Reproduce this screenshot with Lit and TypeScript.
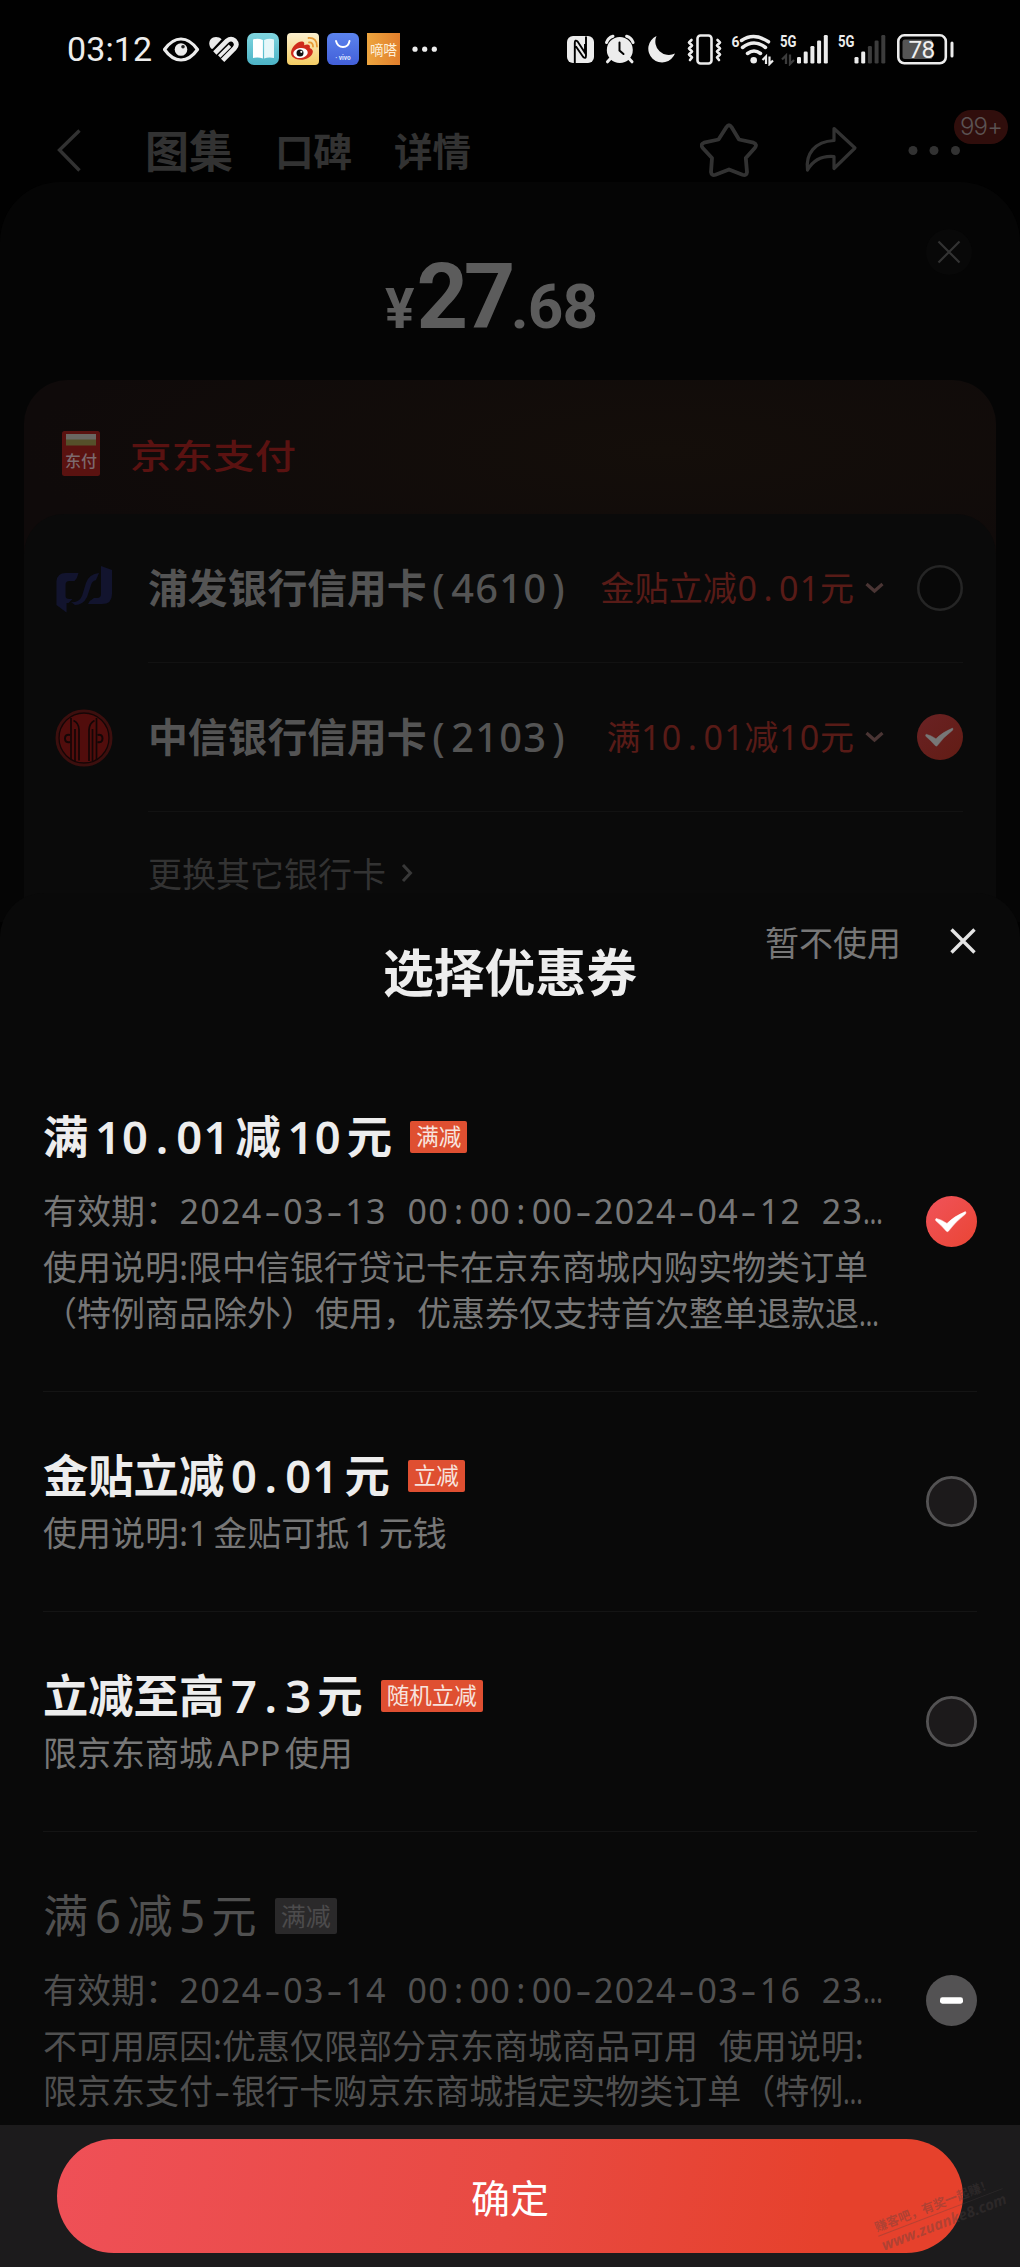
import { LitElement, html, svg, css, nothing } from "lit";
import { customElement, property } from "lit/decorators.js";
import { classMap } from "lit/directives/class-map.js";

/* Sets ASCII runs on a fixed pitch while CJK text keeps its own widths. */
const pitch = (text: string) =>
  (text.match(/[0-9]+|[A-Z]+|[().:\-]|…| +|[^0-9A-Z().:\-… ]+/g) ?? []).map((run) => {
    if (/^[0-9]/.test(run)) return html`<span class="num">${run}</span>`;
    if (/^[A-Z]/.test(run)) return html`<span class="cap">${run}</span>`;
    if (run === "-") return html`<span class="cell hyphen">-</span>`;
    if (run === "…") return html`<span class="more">…</span>`;
    if (/^[().:]$/.test(run)) return html`<span class="cell">${run}</span>`;
    if (/^ /.test(run)) return html`<span class="cell">&nbsp;</span>`;
    return run;
  });

const gap = html`<span class="gap"></span>`;

const shared = css`
  * { box-sizing: border-box; }
  svg { display: block; flex: none; }
  .num { letter-spacing: 0.037em; margin-left: 0.018em; margin-right: -0.018em; }
  .cap { letter-spacing: 0; }
  .cell { display: inline-block; width: 0.61em; text-align: center; }
  .hyphen { transform: scaleX(1.45); }
  .more { display: inline-block; transform: scaleX(0.74); transform-origin: 0 50%; }
  .gap { display: inline-block; width: 0.13em; }
`;

type Mark = "on" | "off" | "none";

@customElement("round-mark")
export class RoundMark extends LitElement {
  @property() kind: Mark = "off";
  @property({ type: Number }) size = 51;
  @property({ type: Boolean }) dim = false;

  static styles = css`
    :host { display: block; flex: none; }
    svg { display: block; }
  `;

  render() {
    const stroke = this.dim ? "#252525" : "#535253";
    const inside = this.dim ? "#080808" : "#1c1a1b";
    return html`<svg width=${this.size} height=${this.size} viewBox="0 0 51 51">
      <defs>
        <linearGradient id="g" x1="0" y1="0" x2="1" y2="1">
          <stop offset="0" stop-color=${this.dim ? "#6a2224" : "#f0535a"} />
          <stop offset="1" stop-color=${this.dim ? "#621c14" : "#ea4534"} />
        </linearGradient>
      </defs>
      ${this.kind === "off"
        ? svg`<circle cx="25.5" cy="25.5" r="24.1" fill=${inside} stroke=${stroke} stroke-width="2.8" />`
        : nothing}
      ${this.kind === "on"
        ? svg`<circle cx="25.5" cy="25.5" r="25.5" fill="url(#g)" />
            <path d="M10.2 22.4q4.800 1 10.800 5Q28.200 20.200 39.400 15.600q1 .9.100 2.400Q29.500 25.500 22.400 35.200q-1 .9-2 0Q15.500 29.500 9.700 24.600q-.6-1.400.5-2.200z" fill=${this.dim ? "#777" : "#fff"} stroke=${this.dim ? "#777" : "#fff"} stroke-width=".5" />`
        : nothing}
      ${this.kind === "none"
        ? svg`<circle cx="25.5" cy="25.5" r="25.5" fill="#535253" />
            <rect x="14" y="22.300" width="23" height="6.400" rx="2.400" fill="#fff" />`
        : nothing}
    </svg>`;
  }
}

@customElement("status-bar")
export class StatusBar extends LitElement {
  static styles = [
    shared,
    css`
      :host { display: flex; align-items: flex-start; height: 98px; padding: 33px 64px 0 67px; }
      .time { font: 400 34px/33px Roboto, "Noto Sans", sans-serif; color: #ededed; width: 96px; letter-spacing: 0.1px; }
      .left { display: flex; gap: 8px; }
      .right { display: flex; margin-left: auto; }
    `,
  ];

  private bars(x: number, lit: number) {
    return [0, 1, 2, 3, 4].map((i) => {
      const top = [57, 51.5, 46, 40.5, 35][i];
      return svg`<rect x=${x + i * 6.7} y=${top} width="4" height=${63.5 - top} rx="1.300" fill=${i < lit ? "#ececec" : "#3c3c3c"} />`;
    });
  }

  render() {
    return html`
      <span class="time">03:12</span>
      <div class="left">
        <svg width="38" height="33" viewBox="163 33 38 33">
          <path d="M164.500 49.500Q172 39 181 39t16.500 10.500Q190 60 181 60t-16.500-10.500z" fill="none" stroke="#ececec" stroke-width="3.200" stroke-linejoin="round" />
          <circle cx="181" cy="49.500" r="6.300" fill="#ececec" /><circle cx="183" cy="46.800" r="1.800" fill="#222" />
        </svg>
        <svg width="30" height="33" viewBox="209 33 30 33">
          <path d="M211.500 48.800C207.500 45 208.800 37 216 37c2.300 0 4.200.8 5.600 2.200L213 48.500q-.7.700-1.500.3z" fill="#ececec" />
          <path d="M214.800 53 227 40.800q4-3.200 7.600-.2 3.500 4-.1 7.700L222.600 60.300" fill="none" stroke="#ececec" stroke-width="4.700" />
          <path d="M219.200 56.500 230 45.700" fill="none" stroke="#ececec" stroke-width="3.400" />
        </svg>
        <svg width="32" height="33" viewBox="247 33 32 33">
          <defs><linearGradient id="bk" x2="0" y2="1"><stop stop-color="#80d5df" /><stop offset="1" stop-color="#4cb3c6" /></linearGradient></defs>
          <rect x="247" y="33" width="32" height="32" rx="7" fill="url(#bk)" />
          <path d="M253 39.500q5-1.800 9.900.6v18.500q-4.700-2-9.900-.5z" fill="#fff" />
          <path d="M274 39.500q-5-1.800-9.900.6v18.500q4.700-2 9.900-.5z" fill="#e6f7f9" />
        </svg>
        <svg width="32" height="33" viewBox="287 33 32 33">
          <defs><linearGradient id="wb" x2="0" y2="1"><stop stop-color="#fbf0cf" /><stop offset="1" stop-color="#f5cd63" /></linearGradient></defs>
          <rect x="287" y="33" width="32" height="32" rx="4" fill="url(#wb)" />
          <path d="M291 53c0-6 7-12.500 11.500-11.500 2 .4 2 2.500 1.600 3.800 3-1.300 6.700-1 5.700 2.600 2.800 1 3.700 3 2.700 5.300-1.500 4-6.500 6.500-11.500 6.500-5.500 0-10-2.700-10-6.700z" fill="#cf2b1d" />
          <ellipse cx="300.500" cy="53" rx="7.300" ry="5" fill="#fff" transform="rotate(-8 300.500 53)" />
          <circle cx="300" cy="53" r="3.500" fill="#111" /><circle cx="301.300" cy="51.800" r="1.100" fill="#fff" />
          <path d="M309 42.500q4-.4 4 4M308.500 38q8.500-.5 8.500 8.500" fill="none" stroke="#e79a35" stroke-width="1.800" stroke-linecap="round" />
        </svg>
        <svg width="32" height="33" viewBox="327 33 32 33">
          <defs><linearGradient id="vb" x2="0" y2="1"><stop stop-color="#5b83ee" /><stop offset="1" stop-color="#425fd8" /></linearGradient></defs>
          <rect x="327" y="33" width="32" height="32" rx="6" fill="url(#vb)" />
          <path d="M336 41q1.500 6 7 6t6.500-6" fill="none" stroke="#fff" stroke-width="1.900" stroke-linecap="round" />
          <text x="343" y="59.600" text-anchor="middle" font-family="Roboto" font-size="6.500" font-weight="700" fill="#dde6ff">· vivo</text>
        </svg>
        <svg width="33" height="33" viewBox="366 33 33 33">
          <defs><linearGradient id="dd" x2="1" y2="0"><stop stop-color="#eda53f" /><stop offset="1" stop-color="#e27f2c" /></linearGradient></defs>
          <rect x="366" y="33" width="33" height="32" fill="url(#dd)" />
          <text x="382.500" y="54.500" text-anchor="middle" font-family="Noto Sans CJK SC" font-size="14" fill="#fdf1dc" textLength="27" lengthAdjust="spacingAndGlyphs">嘀嗒</text>
        </svg>
        <svg width="32" height="33" viewBox="407 33 32 33" fill="#ececec">
          <circle cx="414" cy="49.200" r="2.600" /><circle cx="423.700" cy="49.200" r="2.600" /><circle cx="433.300" cy="49.200" r="2.600" />
        </svg>
      </div>
      <div class="right">
        <svg width="35" height="33" viewBox="565 33 35 33">
          <rect x="567" y="36" width="27" height="27" rx="6" fill="#ececec" />
          <path d="M574.800 63V43q0-4 3-1.200l7.200 11V44M586 36.500v19q0 4-3 1.200l-7.200-10.500" fill="none" stroke="#000" stroke-width="1.900" />
        </svg>
        <svg width="40" height="33" viewBox="600 33 40 33">
          <circle cx="619.800" cy="50" r="13" fill="#ececec" />
          <path d="M606.500 42.500q1.500-4.800 6.500-6.300M633.100 42.500q-1.500-4.800-6.500-6.300M610.500 58.500 607.500 61.800M629 58.500l3 3.300" stroke="#ececec" stroke-width="3" stroke-linecap="round" fill="none" />
          <path d="M619.500 42.500v8l4 3.500" fill="none" stroke="#000" stroke-width="2" stroke-linecap="round" />
        </svg>
        <svg width="42" height="33" viewBox="640 33 42 33">
          <path d="M656.500 36A13.800 13.800 0 1 0 675 53.500 13.500 13.500 0 0 1 656.500 36z" fill="#ececec" />
        </svg>
        <svg width="45" height="33" viewBox="682 33 45 33" fill="none" stroke="#ececec">
          <rect x="697.500" y="35.500" width="14" height="28" rx="3" stroke-width="2.600" />
          <path d="m691.500 40-2.500 2.500 3 3-3 3 3 3-3 3 3 3-2 2.500M717.500 40l2.500 2.500-3 3 3 3-3 3 3 3-3 3 2 2.500" stroke-width="2.600" stroke-linejoin="round" stroke-linecap="round" />
        </svg>
        <svg width="50" height="33" viewBox="727 33 50 33" fill="none" stroke="#ececec">
          <text x="731.500" y="46.500" font-family="Roboto" font-weight="700" font-size="15.500" textLength="8" lengthAdjust="spacingAndGlyphs" fill="#ececec" stroke="none">6</text>
          <path d="M741.500 40.500q12.500-8.500 27 1.300M742.500 47.500q11.500-9 23 0M747.500 53.500q6.500-5 13 0" stroke-width="3.500" stroke-linecap="round" />
          <circle cx="753.700" cy="60.300" r="3.300" fill="#ececec" stroke="none" />
          <path d="m762.500 60 3.500-3.500V64M769.500 56.500V64l3.500-3.500" stroke-width="2.200" />
        </svg>
        <svg width="57" height="33" viewBox="777 33 57 33">
          <text x="780" y="46.800" font-family="Roboto" font-weight="700" font-size="16.500" textLength="16.500" lengthAdjust="spacingAndGlyphs" fill="#ececec">5G</text>
          <path d="m782 59.500 4-4V64M790 54.500V64l4-4" stroke="#3c3c3c" stroke-width="2.300" fill="none" />
          ${this.bars(797, 5)}
        </svg>
        <svg width="58" height="33" viewBox="834 33 58 33">
          <text x="838" y="46.800" font-family="Roboto" font-weight="700" font-size="16.500" textLength="16.500" lengthAdjust="spacingAndGlyphs" fill="#ececec">5G</text>
          ${this.bars(854.5, 2)}
        </svg>
        <svg width="64" height="33" viewBox="892 33 64 33">
          <rect x="898.300" y="35.300" width="47.500" height="28" rx="6" fill="none" stroke="#ececec" stroke-width="2.600" />
          <rect x="902.500" y="39.500" width="30" height="19.500" rx="2.500" fill="#555" />
          <rect x="950.500" y="41.500" width="3" height="16" rx="1.500" fill="#ececec" />
          <text x="921.500" y="58" text-anchor="middle" font-family="Roboto" font-size="24.500" font-weight="400" letter-spacing="-.8" fill="#f0f0f0">78</text>
        </svg>
      </div>
    `;
  }
}

@customElement("page-nav")
export class PageNav extends LitElement {
  static styles = [
    shared,
    css`
      :host { display: flex; align-items: center; height: 104px; padding: 0 12px 0 55px; color: #323232; font-family: "Noto Sans CJK SC", sans-serif; font-weight: 700; }
      .tabs { display: flex; align-items: center; margin-left: 62px; padding-bottom: 2px; gap: 42px; font-size: 38.500px; line-height: 60px; }
      .first { font-size: 44px; }
      .tools { display: flex; align-items: center; margin-left: auto; }
      .menu { position: relative; width: 111px; }
      .badge { position: absolute; left: 57px; top: -10px; width: 54px; height: 34px; border-radius: 17px; background: #300e0c; color: #5b5353; font: 300 24px/34px Inter, "Noto Sans", sans-serif; letter-spacing: -0.8px; text-align: center; }
    `,
  ];

  render() {
    return html`
      <svg width="28" height="48" viewBox="55 126 28 48"><path d="M79.500 130.500 59.500 150l20 20.500" fill="none" stroke="#323232" stroke-width="3.400" /></svg>
      <div class="tabs"><span class="first">图集</span><span>口碑</span><span>详情</span></div>
      <div class="tools">
        <svg width="100" height="60" viewBox="701 120 100 60"><path d="M727.500 127q2.500-3.500 5 0l7.500 12.500 14.500 3.200q4 1.500 1.500 5L746.800 158l1.200 14q-.3 4-4.500 2.700L730 169.500l-13.500 5.200q-4 1.300-4.500-2.700l1-14-9.500-10.300q-2.500-3.500 1.500-5l14.500-3.200z" fill="none" stroke="#323232" stroke-width="3.800" stroke-linejoin="round" /></svg>
        <svg width="97" height="60" viewBox="801 120 97 60"><path d="M835 128.500 856 148l-21 20.500V156.500c-12-1-20.500 3-26.500 13.500-2-16 7-28.500 26.500-29.500z" fill="none" stroke="#323232" stroke-width="3.200" stroke-linejoin="round" /></svg>
        <div class="menu">
          <svg width="70" height="60" viewBox="897 120 70 60" fill="#323232"><circle cx="913" cy="150.500" r="4.500" /><circle cx="934" cy="150.500" r="4.500" /><circle cx="955.500" cy="150.500" r="4.500" /></svg>
          <span class="badge">99+</span>
        </div>
      </div>
    `;
  }
}

interface Bank { logo: "spd" | "citic"; name: string; offer: string; mark: Mark; }

const BANKS: Bank[] = [
  { logo: "spd", name: "浦发银行信用卡(4610)", offer: "金贴立减0.01元", mark: "off" },
  { logo: "citic", name: "中信银行信用卡(2103)", offer: "满10.01减10元", mark: "on" },
];

@customElement("pay-sheet")
export class PaySheet extends LitElement {
  static styles = [
    shared,
    css`
      :host { display: block; height: 740px; margin-top: -20px; border-radius: 60px 60px 0 0; background: #050505; padding: 0 24px; font-family: "Noto Sans", "Noto Sans CJK SC", sans-serif; overflow: hidden; }
      .top { display: grid; grid-template-columns: 46px 1fr 46px; height: 198px; }
      .price { display: flex; justify-content: center; align-items: baseline; padding: 64px 38px 0 0; color: #5c5c5c; font: 700 90px/104px Roboto, sans-serif; letter-spacing: -4.500px; }
      .yen { font-size: 55px; letter-spacing: 2px; }
      .cents { font-size: 62px; letter-spacing: -1px; }
      .x { margin: 47px 0 0 -24px; }
      .card { border-radius: 44px 44px 0 0; height: 560px; background: radial-gradient(ellipse 640px 150px at 640px 70px, #140e0a, #0f0a0a 100%); }
      .brand { display: flex; align-items: center; height: 134px; padding: 13px 0 0 38px; }
      .brand-name { display: inline-block; margin-left: 30px; color: #5a1211; font: 500 41.500px/50px "Noto Sans CJK SC", sans-serif; transform: scaleY(0.82); }
      .list { background: #0a0a0a; height: 430px; border-radius: 40px 40px 0 0; padding-right: 33px; }
      .row { display: flex; align-items: center; height: 149px; }
      .logo { width: 124px; padding-left: 31px; flex: none; }
      .body { flex: 1; display: flex; align-items: center; height: 149px; border-bottom: 1.500px solid #121212; }
      .name { font-weight: 700; font-size: 39.800px; line-height: 60px; color: #545454; white-space: nowrap; }
      .name .num { font-weight: 500; letter-spacing: 0.03em; }
      .name .cell { font-weight: 500; width: 0.603em; }
      .offer { margin-left: auto; font-size: 34.100px; line-height: 60px; color: #581b17; white-space: nowrap; }
      .arrow { margin: 0 33px 0 11px; }
      .other { display: flex; align-items: center; gap: 15px; height: 121px; padding-left: 124px; font-size: 34px; color: #333; }
    `,
  ];

  private logo(kind: Bank["logo"]) {
    if (kind === "spd")
      return html`<svg width="60" height="50" viewBox="56 563 60 50">
        <path d="M57.500 604V580q1-8 9-8h13q-1 5-4 8h-5q-4 0-4 4v11q0 3 4 3h3l-4 4h-2v9.500z" fill="#12142e" />
        <path d="M72 601q8 1 11-6l4-13q3-9 13-10l-3 7q-4 1-5 5l-4 12q-4 8-12 8z" fill="#12142e" />
        <path d="M102 565l11 4v24q0 10-10 10H89q2-4 6-6h3q4 0 4-4z" fill="#12142e" />
      </svg>`;
    return html`<svg width="60" height="58" viewBox="56 708 60 58">
      <circle cx="85" cy="737" r="27" fill="#510d0c" stroke="#3c0f0e" stroke-width="3" />
      <circle cx="85" cy="737" r="25" fill="none" stroke="#140606" stroke-width="1.300" />
      <path d="M72 717v42M74.500 719.500q5 2 5.500 9v31M90 760v-31q.5-7 5.500-9.500M97.500 717v42M76 728v32M93.500 728v32" fill="none" stroke="#140606" stroke-width="1.700" />
      <path d="M71 734q-5-1-5 3.500t5 3.500M98.500 734q5-1 5 3.500t-5 3.500" fill="none" stroke="#140606" stroke-width="2" />
    </svg>`;
  }

  render() {
    return html`
      <div class="top">
        <span></span>
        <div class="price"><span class="yen">¥</span><span>27</span><span class="cents">.68</span></div>
        <svg class="x" width="46" height="46" viewBox="0 0 46 46"><circle cx="23" cy="23" r="23" fill="#080808" /><path d="m12.500 12.500 21 21m0-21-21 21" stroke="#333" stroke-width="2.200" /></svg>
      </div>
      <div class="card">
        <div class="brand">
          <svg width="38" height="46" viewBox="0 0 38 46">
            <rect width="38" height="45" rx="2.500" fill="#5a1210" /><rect x="4" y="3" width="30" height="6" fill="#6a6762" /><rect x="4" y="8.500" width="30" height="6" fill="#55502a" />
            <text x="19" y="35.500" text-anchor="middle" font-family="Noto Sans CJK SC" font-size="16" font-weight="500" fill="#7c6a6e">东付</text>
          </svg>
          <span class="brand-name">京东支付</span>
        </div>
        <div class="list">
          ${BANKS.map(
            (b) => html`<div class="row">
              <div class="logo">${this.logo(b.logo)}</div>
              <div class="body">
                <span class="name">${pitch(b.name)}</span>
                <span class="offer">${pitch(b.offer)}</span>
                <svg class="arrow" width="19" height="12" viewBox="0 0 19 12"><path d="m1.500 2 8 7 8-7" fill="none" stroke="#4a3534" stroke-width="3.200" /></svg>
                <round-mark .kind=${b.mark} .size=${46} dim></round-mark>
              </div>
            </div>`
          )}
          <div class="other">
            <span>更换其它银行卡</span>
            <svg width="12" height="20" viewBox="0 0 12 20"><path d="m2 2 7.500 8L2 18" fill="none" stroke="#383838" stroke-width="3" /></svg>
          </div>
        </div>
      </div>
    `;
  }
}

interface Coupon { title: string[]; tag: string; date?: string; lines: unknown[]; mark: Mark; off?: boolean; }

const COUPONS: Coupon[] = [
  {
    title: ["满", "10.01", "减", "10", "元"], tag: "满减", mark: "on",
    date: "有效期：2024-03-13 00:00:00-2024-04-12 23…",
    lines: ["使用说明:限中信银行贷记卡在京东商城内购实物类订单", html`（特例商品除外）使用，优惠券仅支持首次整单退款退<span class="more">…</span>`],
  },
  { title: ["金贴立减", "0.01", "元"], tag: "立减", mark: "off", lines: [html`使用说明:<span class="num">1</span>${gap}金贴可抵${gap}<span class="num">1</span>${gap}元钱`] },
  { title: ["立减至高", "7.3", "元"], tag: "随机立减", mark: "off", lines: [html`限京东商城${gap}<span class="cap">APP</span>${gap}使用`] },
  {
    title: ["满", "6", "减", "5", "元"], tag: "满减", mark: "none", off: true,
    date: "有效期：2024-03-14 00:00:00-2024-03-16 23…",
    lines: [
      html`不可用原因:优惠仅限部分京东商城商品可用<span class="cell">&nbsp;</span>使用说明:`,
      html`限京东支付<span class="dash">-</span>银行卡购京东商城指定实物类订单（特例<span class="more">…</span>`,
    ],
  },
];

@customElement("coupon-sheet")
export class CouponSheet extends LitElement {
  static styles = [
    shared,
    css`
      :host { display: block; position: relative; height: 1232px; margin-top: -29px; border-radius: 44px 44px 0 0; background: #090909; padding: 0 43px; overflow: hidden; font-family: "Noto Sans", "Noto Sans CJK SC", sans-serif; }
      .head { display: grid; grid-template-columns: 1fr auto 1fr; height: 160px; }
      .title { grid-column: 2; font: 700 50.800px/60px "Noto Sans CJK SC", sans-serif; color: #ededed; padding-top: 47px; }
      .acts { display: flex; justify-content: flex-end; gap: 48px; align-items: center; height: 60px; margin-top: 18px; font-size: 34px; color: #777; }
      .item { display: flex; align-items: center; border-bottom: 1.500px solid #141414; }
      .item:last-child { border: 0; }
      .text { flex: 1; padding: 61px 0 54.500px; white-space: nowrap; color: #777; font-size: 34px; line-height: 45.500px; }
      .row { display: flex; align-items: center; height: 46px; font-size: 45.300px; font-weight: 700; line-height: 46px; color: #ededed; margin-bottom: 12px; }
      .name > .num, .name > .cell { font-weight: 600; }
      .name > .num { letter-spacing: 0.026em; }
      .name > .cell { width: 0.6em; }
      .tag { font-size: 22.500px; font-weight: 400; line-height: 32px; height: 32px; padding: 0 6px; border-radius: 2px; background: #df4f31; color: #f7e4df; margin-left: 18px; }
      .date { line-height: 46px; margin: 28px 0 11px; }
      .dash { display: inline-block; width: 18.300px; text-align: center; transform: scaleX(1.45); }
      .off .row { font-weight: 400; color: #505050; }
      .off .name > .num { font-weight: 400; }
      .off .text { color: #505050; }
      .off .tag { font-size: 25px; height: 36px; line-height: 36px; background: #2a292a; color: #4c4b4c; }
      .line { height: 45.500px; }
    `,
  ];

  render() {
    return html`
      <div class="head">
        <span class="title">选择优惠券</span>
        <div class="acts">
          <span>暂不使用</span>
          <svg width="28" height="28" viewBox="0 0 28 28"><path d="m2.500 2.500 23 23m0-23-23 23" stroke="#e4e4e4" stroke-width="3.400" /></svg>
        </div>
      </div>
      ${COUPONS.map(
        (c) => html`<div class=${classMap({ item: true, off: !!c.off })}>
          <div class="text">
            <div class="row">
              <span class="name">${c.title.map((t, i) => html`${i ? gap : nothing}${pitch(t)}`)}</span>
              <span class="tag">${c.tag}</span>
            </div>
            ${c.date ? html`<div class="date">${pitch(c.date)}</div>` : nothing}
            ${c.lines.map((l) => html`<div class="line">${l}</div>`)}
          </div>
          <round-mark .kind=${c.mark}></round-mark>
        </div>`
      )}
    `;
  }
}

@customElement("app-root")
export class AppRoot extends LitElement {
  static styles = [
    shared,
    css`
      :host { display: block; width: 1020px; height: 2267px; overflow: hidden; background: #010101; }
      .foot { position: relative; height: 142px; background: #1c1b1c; padding: 14px 57px 0; }
      .ok { display: block; width: 906px; height: 114px; border: 0; padding: 0; border-radius: 57px; background: linear-gradient(100deg, #ef5057, #e84a42 50%, #e6412c 85%); color: #fff; font: 400 39px/114px "Noto Sans CJK SC", sans-serif; text-align: center; }
      .mark { position: absolute; left: 874px; top: 69px; transform: rotate(-21deg); font: 700 12.500px/18px "Noto Sans CJK SC", sans-serif; color: rgba(75, 65, 65, 0.36); white-space: nowrap; }
      .mark span { display: block; }
      .site { font: italic 700 15px/18px "Open Sans", "Noto Sans", sans-serif; border-top: 1px solid rgba(75, 65, 65, 0.3); }
    `,
  ];

  render() {
    return html`
      <status-bar></status-bar>
      <page-nav></page-nav>
      <pay-sheet></pay-sheet>
      <coupon-sheet></coupon-sheet>
      <div class="foot">
        <button class="ok">确定</button>
        <div class="mark"><span>赚客吧，有奖一起赚！</span><span class="site">www.zuanke8.com</span></div>
      </div>
    `;
  }
}
